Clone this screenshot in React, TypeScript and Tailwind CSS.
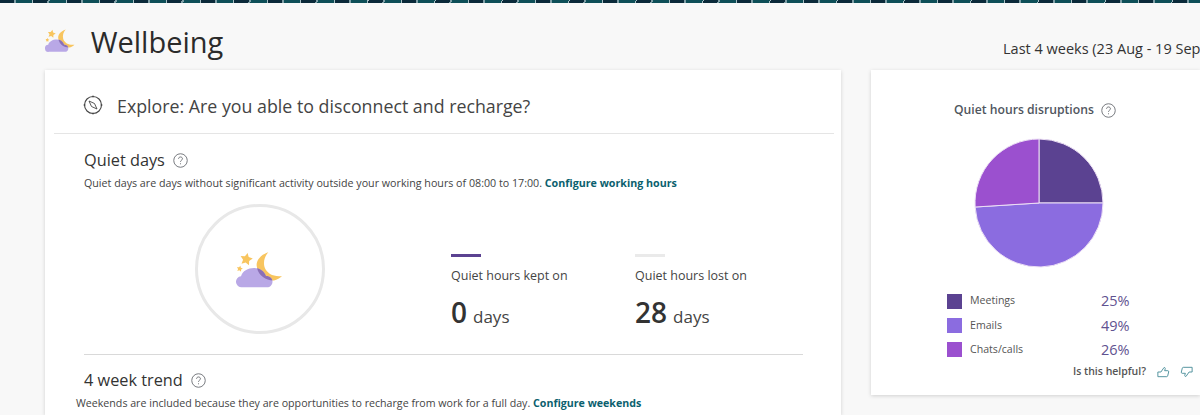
const font = { fontFamily: '"Open Sans", "Noto Sans", sans-serif' };

function Help({ size = 15 }: { size?: number }) {
  return (
    <svg width={size} height={size} viewBox="0 0 16 16" fill="none" className="shrink-0">
      <circle cx="8" cy="8" r="7.2" stroke="#5f6368" strokeWidth="0.9" />
      <path d="M5.900 6.200c0-1.200 1-2 2.100-2s2.100.8 2.100 1.900c0 1.600-2.100 1.600-2.100 3.300" stroke="#5f6368" strokeWidth="0.9" />
      <circle cx="8" cy="11.500" r="0.6" fill="#5f6368" />
    </svg>
  );
}

function Thumb({ down = false }: { down?: boolean }) {
  return (
    <svg width="13" height="12" viewBox="0 0 15 13" fill="none" className={down ? "rotate-180" : ""}>
      <path
        d="M1 6.500h3.500L8 1.500c1-.5 1.800.3 1.500 1.300L8.800 5h3.700c.8 0 1.200.7 1 1.400l-1.200 4.600c-.2.6-.6.900-1.200.9H1Z"
        stroke="#4f919c"
        strokeWidth="1.100"
        strokeLinejoin="round"
      />
    </svg>
  );
}

const moon = "M32.300 2.300C24 5 20 11 20.700 16 21.500 25 30 31 38 30.500 41 30 44 28 46 26 38 27 31 24 28.500 17 27 11 29 6 32.300 2.300Z";
const cloud = "M6 37.300a5.500 5.500 0 0 1-1-11C6.500 21 12 18 18 18c6 0 10 3 12 8 4 0 6.500 2.500 6.500 5.500 0 3.500-2.500 5.800-5.500 5.800Z";

function star(cx: number, cy: number, r: number) {
  const pts: string[] = [];
  for (let i = 0; i < 10; i++) {
    const a = (Math.PI / 5) * i - Math.PI / 2 + 0.2;
    const rad = i % 2 === 0 ? r : r * 0.5;
    pts.push(`${cx + rad * Math.cos(a)},${cy + rad * Math.sin(a)}`);
  }
  return pts.join(" ");
}

function Night({ scale = 1, id }: { scale?: number; id: string }) {
  return (
    <svg width={48 * scale} height={38 * scale} viewBox="0 0 48 38">
      <defs>
        <clipPath id={id}>
          <path d={cloud} />
        </clipPath>
      </defs>
      <path d={moon} fill="#f8c55f" />
      <polygon points={star(10.300, 9.300, 6.500)} fill="#f8c55f" />
      <polygon points={star(3.700, 18.800, 3.200)} fill="#f8c55f" />
      <path d={cloud} fill="#b9a8e6" />
      <path d={moon} fill="#8a6fb5" clipPath={`url(#${id})`} />
    </svg>
  );
}

function Stat({ bar, label, value }: { bar: string; label: string; value: string }) {
  return (
    <div className="w-[184px] shrink-0">
      <div className={`h-[3px] w-[30px] ${bar}`} />
      <div className="mt-[10px] text-[12.500px] leading-[18px] text-[#444]">{label}</div>
      <div className="mt-[8px] flex items-baseline gap-[6px] text-[#333]">
        <span className="text-[28px] leading-[38px] font-semibold">{value}</span>
        <span className="text-[17px] leading-[24px] text-[#444]">days</span>
      </div>
    </div>
  );
}

function LegendRow({ color, label, pct }: { color: string; label: string; pct: string }) {
  return (
    <div className="flex h-[24.400px] items-center">
      <div className={`h-[15px] w-[15px] ${color}`} />
      <div className="ml-[8px] w-[131px] text-[10.600px] text-[#555]">{label}</div>
      <div className="text-[14.500px] text-[#5f5290]">{pct}</div>
    </div>
  );
}

function Pie() {
  const cx = 65, cy = 65, r = 64;
  const pt = (p: number) => {
    const a = 2 * Math.PI * p - Math.PI / 2;
    return `${cx + r * Math.cos(a)} ${cy + r * Math.sin(a)}`;
  };
  const slice = (a: number, b: number, fill: string) => (
    <path d={`M${cx} ${cy}L${pt(a)}A${r} ${r} 0 0 1 ${pt(b)}Z`} fill={fill} stroke="#ecdff5" strokeWidth="1" />
  );
  return (
    <svg width="130" height="130" viewBox="0 0 130 130">
      {slice(0, 0.25, "#5b4291")}
      {slice(0.25, 0.74, "#8b6ce0")}
      {slice(0.74, 1, "#9b50cf")}
    </svg>
  );
}

export default function App() {
  return (
    <div style={font} className="h-[415px] w-[1200px] overflow-hidden bg-[#f8f8f8]">
      <div className="h-[3px] bg-[repeating-linear-gradient(100deg,#0b2a3a_0px,#0b2a3a_14px,#7f9ea6_14px,#7f9ea6_16px,#0e4f58_16px,#0e4f58_32px,#a9bfc4_32px,#a9bfc4_33px)]" />
      <div className="flex h-[67px] items-center pl-[45px]">
        <div className="mt-[7px]"><Night scale={0.64} id="n1" /></div>
        <h1 className="ml-[15px] mt-[10px] text-[29px] leading-[40px] font-normal text-[#2b2b2b]">Wellbeing</h1>
        <div className="ml-auto mt-[24px] w-[197px] whitespace-nowrap text-[14.500px] font-medium text-[#333]">Last 4 weeks (23 Aug - 19 Sep)</div>
      </div>
      <div className="flex items-start pl-[45px]">
        <div className="h-[345px] w-[796px] bg-white pl-[9px] pr-[7px] shadow-[0_1px_4px_rgba(0,0,0,0.16)]">
          <div className="flex h-[64px] items-center border-b border-[#e5e5e5] pl-[29px] pt-[10px]">
            <svg width="20" height="20" viewBox="0 0 20 20" fill="none" className="-mt-[4px]">
              <circle cx="10" cy="10" r="8.500" stroke="#444" strokeWidth="1.100" />
              <path d="M6 6 11.500 8.500 14 14 8.500 11.500Z" stroke="#444" strokeWidth="0.9" />
              <path d="M10 .5v2M10 17.500v2M.5 10h2M17.500 10h2" stroke="#444" strokeWidth="0.9" />
            </svg>
            <span className="ml-[14px] text-[17.800px] text-[#444]">Explore: Are you able to disconnect and recharge?</span>
          </div>
          <div className="pl-[30px] pr-[31px]">
            <div className="mt-[14px] flex items-center gap-[8px]">
              <span className="text-[16.300px] leading-[24px] text-[#333]">Quiet days</span>
              <Help />
            </div>
            <p className="mt-[4px] whitespace-nowrap text-[10.700px] leading-[14px] text-[#444]">
              Quiet days are days without significant activity outside your working hours of 08:00 to 17:00.{" "}
              <a className="font-bold text-[#0b5f6e]">Configure working hours</a>
            </p>
            <div className="mt-[14px] flex h-[151px] border-b border-[#d9d9d9]">
              <div className="ml-[111px] flex h-[130px] w-[130px] shrink-0 items-center justify-center rounded-full border-[3px] border-[#e8e8e8]">
                <Night id="n2" />
              </div>
              <div className="ml-[126px] mt-[50px] flex">
                <Stat bar="bg-[#5b4291]" label="Quiet hours kept on" value="0" />
                <Stat bar="bg-[#eaeaea]" label="Quiet hours lost on" value="28" />
              </div>
            </div>
            <div className="mt-[13px] flex items-center gap-[8px]">
              <span className="text-[16.300px] leading-[24px] text-[#333]">4 week trend</span>
              <Help />
            </div>
            <p className="-ml-[8px] mt-[4px] whitespace-nowrap text-[10.650px] leading-[14px] text-[#444]">
              Weekends are included because they are opportunities to recharge from work for a full day.{" "}
              <a className="font-bold text-[#0b5f6e]">Configure weekends</a>
            </p>
          </div>
        </div>
        <div className="ml-[30px] h-[325px] flex-1 bg-white pt-[32px] shadow-[0_1px_4px_rgba(0,0,0,0.16)]">
          <div className="ml-[83px] flex items-center gap-[7px]">
            <span className="text-[12.200px] font-semibold leading-[16px] text-[#50565e]">Quiet hours disruptions</span>
            <Help size={15} />
          </div>
          <div className="ml-[103px] mt-[20px]"><Pie /></div>
          <div className="ml-[76px] mt-[21px] w-[200px]">
            <LegendRow color="bg-[#5b4291]" label="Meetings" pct="25%" />
            <LegendRow color="bg-[#8b6ce0]" label="Emails" pct="49%" />
            <LegendRow color="bg-[#9b50cf]" label="Chats/calls" pct="26%" />
          </div>
          <div className="ml-[202px] flex h-[20px] items-center">
            <span className="text-[10.500px] font-semibold text-[#555]">Is this helpful?</span>
            <span className="ml-[11px] flex"><Thumb /></span>
            <span className="ml-[10px] flex"><Thumb down /></span>
          </div>
        </div>
      </div>
    </div>
  );
}
